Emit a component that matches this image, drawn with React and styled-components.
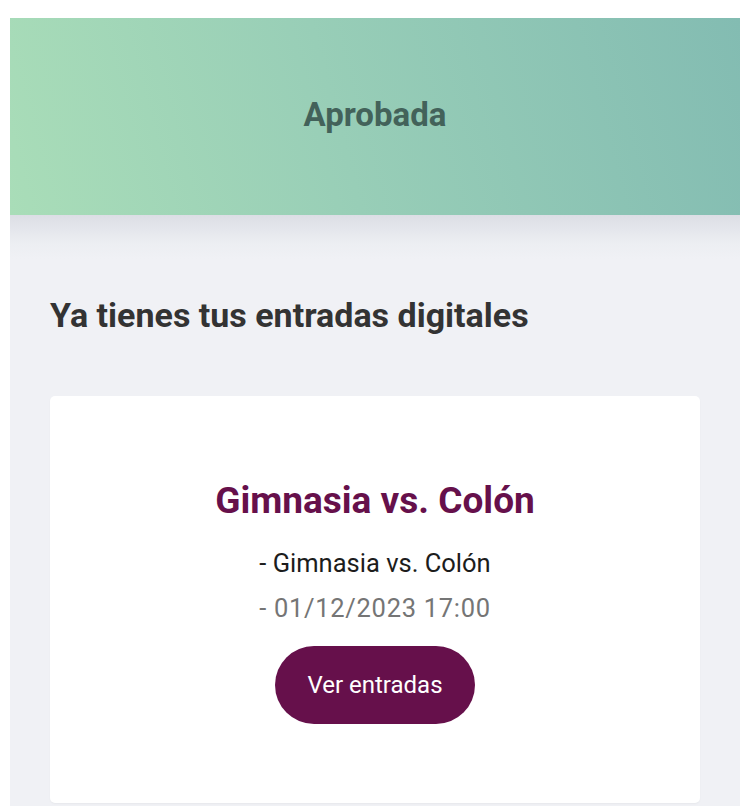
import styled, { createGlobalStyle } from 'styled-components';

const GlobalStyle = createGlobalStyle`
    html, body {
        margin: 0;
        padding: 0;
        background: #FFF;
        font-family: Roboto, "Noto Sans", sans-serif;
    }
    * {
        box-sizing: border-box;
    }
`;

export default function App() {

    const partido = {
        titulo: "Gimnasia vs. Colón",
        fecha: "01/12/2023 17:00"
    };

    return (
        <>
            <GlobalStyle />
            <Page>
                <Header>
                    <h1>Aprobada</h1>
                </Header>
                <Body>
                    <Subtitle>Ya tienes tus entradas digitales</Subtitle>
                    <Card>
                        <MatchTitle>{partido.titulo}</MatchTitle>
                        <Detail>- {partido.titulo}</Detail>
                        <Detail muted>- {partido.fecha}</Detail>
                        <Button type="button">Ver entradas</Button>
                    </Card>
                </Body>
            </Page>
        </>
    )
}


/* --- STYLES --- */
const Page = styled.div`
    padding: 18px 9px 0 10px;
    min-height: 806px;
    display: flex;
    flex-direction: column;
`;
const Header = styled.div`
    height: 197px;
    background: linear-gradient(75deg, #a9ddb8 0%, #98ceb7 45%, #83bcb2 100%);
    display: flex;
    align-items: center;
    justify-content: center;
    h1{
        margin: 0;
        margin-top: -4px;
        font-size: 33px;
        font-weight: 700;
        color: #43625a;
    }
`;
const Body = styled.div`
    flex: 1;
    background: linear-gradient(180deg, #dcdee5 0px, #eceef2 28px, #f0f1f5 44px);
    padding: 80px 40px 3px 40px;
    display: flex;
    flex-direction: column;
`;
const Subtitle = styled.h2`
    margin: 0 0 61px 0;
    font-size: 34px;
    line-height: 40px;
    font-weight: 700;
    color: #333333;
`;
const Card = styled.div`
    background: #FFF;
    border-radius: 5px;
    box-shadow: 0 1px 2px rgba(0, 0, 0, 0.04);
    padding: 85px 20px 79px 20px;
    display: flex;
    flex-direction: column;
    align-items: center;
`;
const MatchTitle = styled.h3`
    margin: 0 0 27px 0;
    font-size: 37px;
    line-height: 40px;
    font-weight: 700;
    color: #66104b;
`;
const Detail = styled.p`
    margin: 0 0 14px 0;
    font-size: 25.5px;
    line-height: 31px;
    font-weight: 400;
    letter-spacing: ${props => props.muted ? "0.7px" : "0"};
    color: ${props => props.muted ? "#757575" : "#1c1c1c"};
`;
const Button = styled.button`
    margin-top: 8px;
    width: 200px;
    height: 78px;
    border: none;
    border-radius: 39px;
    background: #66104b;
    color: #FFF;
    font-family: Roboto, "Noto Sans", sans-serif;
    font-size: 24px;
    font-weight: 400;
    cursor: pointer;
`;
